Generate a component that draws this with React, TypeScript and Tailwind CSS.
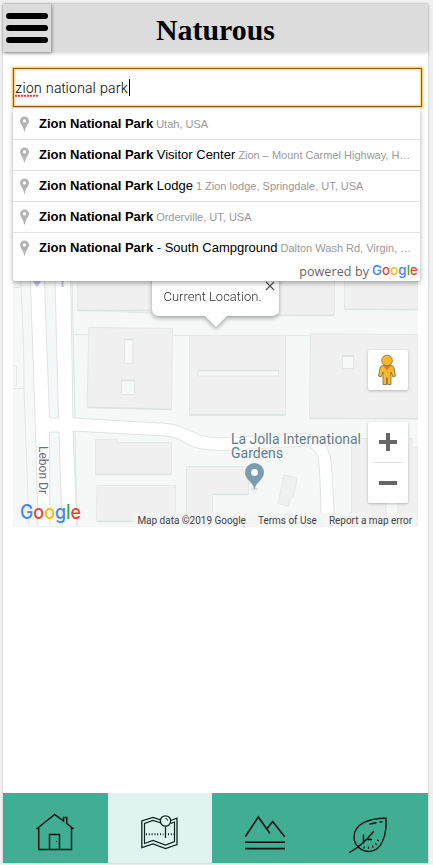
import React from "react";

type Suggestion = { main: string; rest?: string; detail: string };

const suggestions: Suggestion[] = [
  { main: "Zion National Park", detail: "Utah, USA" },
  { main: "Zion National Park", rest: "Visitor Center", detail: "Zion – Mount Carmel Highway, H…" },
  { main: "Zion National Park", rest: "Lodge", detail: "1 Zion lodge, Springdale, UT, USA" },
  { main: "Zion National Park", detail: "Orderville, UT, USA" },
  { main: "Zion National Park", rest: "- South Campground", detail: "Dalton Wash Rd, Virgin, …" },
];

function GoogleWord({ size, width }: { size: number; width: number }) {
  return (
    <svg width={width + 1} height={size * 1.3} className="block overflow-visible" fontFamily="Inter, sans-serif" fontWeight="500" fontSize={size}>
      <text x="0" y={size * 0.97} textLength={width} lengthAdjust="spacingAndGlyphs">
        <tspan fill="#4285f4">G</tspan>
        <tspan fill="#ea4335">o</tspan>
        <tspan fill="#fbbc05">o</tspan>
        <tspan fill="#4285f4">g</tspan>
        <tspan fill="#34a853">l</tspan>
        <tspan fill="#ea4335">e</tspan>
      </text>
    </svg>
  );
}

function Header() {
  return (
    <header className="relative flex h-[48px] items-center justify-center bg-[#dcdcdc] shadow-[0_1px_4px_rgba(0,0,0,0.2)]">
      <button aria-label="Menu" className="absolute left-0 top-0 flex h-[48px] w-[48px] flex-col items-center justify-center gap-[6px] shadow-[1px_1px_3px_rgba(0,0,0,0.4)]">
        <span className="h-[6px] w-[42px] rounded-full bg-black" />
        <span className="h-[6px] w-[42px] rounded-full bg-black" />
        <span className="h-[6px] w-[42px] rounded-full bg-black" />
      </button>
      <h1 className="pt-[4px] font-['Liberation_Serif',serif] text-[30px] font-bold leading-[44px]">
        <svg width="120" height="44" className="block">
          <text x="0" y="32" textLength="119" lengthAdjust="spacingAndGlyphs">Naturous</text>
        </svg>
      </h1>
    </header>
  );
}

function SearchBox() {
  return (
    <div className="ml-[10px] mt-[16px] flex h-[39px] w-[409px] items-center border border-[#8f5f08] bg-white pl-px shadow-[0_0_2px_1px_#f2b544,inset_0_0_2px_1px_#f8cf86]">
      <div className="relative flex items-center font-[Inter,sans-serif] text-[14px] leading-[18px] text-[#222]">
        <svg width="114" height="20" className="block overflow-visible">
          <text x="0" y="15" textLength="113" lengthAdjust="spacingAndGlyphs" fontWeight="300" fill="#111">zion national park</text>
          <path d="M0 17.8H23" stroke="#f03b3b" strokeWidth="2" strokeDasharray="2 1" />
        </svg>
        <span className="h-[17px] w-px bg-black" />
      </div>
    </div>
  );
}

function Suggestions() {
  return (
    <div className="absolute left-0 top-[-19px] h-[173px] w-[407px] rounded-b-[2px] bg-white font-['Liberation_Sans',sans-serif] shadow-[0_2px_5px_rgba(0,0,0,0.35)]">
      {suggestions.map((item, index) => (
        <div key={index} className={`flex h-[31px] items-center pl-[7px] ${index === 0 ? "" : "border-t border-[#e2e2e2]"}`}>
          <svg width="9" height="16" viewBox="0 0 9 16" className="mr-[10px] shrink-0">
            <path fillRule="evenodd" d="M4.5.5C2 .5 0 2.400 0 4.900C0 8 3.500 9.500 4.100 15.500H4.900C5.500 9.500 9 8 9 4.900C9 2.400 7 .5 4.500 .5ZM4.500 3.200a1.700 1.700 0 1 1 0 3.400a1.700 1.700 0 0 1 0-3.400Z" fill="#b3b3b3" />
          </svg>
          <div className="whitespace-nowrap text-[11px] leading-[30px] text-[#999]">
            <span className="text-[13px] text-black"><b>{item.main}</b>{item.rest ? ` ${item.rest}` : ""}</span>
            <span className="ml-[3px]">{item.detail}</span>
          </div>
        </div>
      ))}
      <div className="flex h-[16px] items-center justify-end gap-[3px] pr-px font-['Open_Sans',sans-serif] text-[12.5px] tracking-[0.1px] text-[#666]">
        <span className="pt-[2px]">powered by</span>
        <GoogleWord size={13.5} width={46} />
      </div>
    </div>
  );
}

function StreetMap() {
  return (
    <svg width="405" height="400" viewBox="13 127 405 400" className="block">
      <rect x="13" y="127" width="405" height="400" fill="#f6f8f8" />
      <g fill="none" stroke="#e3e7e7">
        <path d="M20 270C23 320 24 360 24 388L29 527M13 388.500H24M13 366h3.500v19.500H13M13 287.500H20" />
        <path d="M74 334.500L190 335.500H290L418 336.500" />
      </g>
      <path d="M29 240L35.500 430L38 527H77L73 431L165 436C182 437 186 447 203 449.300Q214 450.500 226 450.300L304 446.200Q314 446 318 457Q320 465 321.500 527H335L331.500 464Q329 444 318 437.500Q309 432.500 296 433.300L226 437.800Q209 438 200 435C188 430 178 424 165 423.300L73 418L70 240Z" fill="#fff" stroke="#e1e4e4" />
      <g fill="#f5f8f8" stroke="#e1e4e4">
        <path d="M43 240L49.500 418H58.500L54 240ZM49.500 432H59L62 527H50Z" />
        <path d="M72 280L75 418M75 431L77 527" fill="none" />
      </g>
      <path d="M32 280h10l-5 7ZM61.500 281h2v6h-2Z" fill="#bfc4dc" />
      <g fill="#f0f0f0" stroke="#e5e8e8">
        <path d="M77.500 250H334.500V315L224 316L77.500 310ZM344.500 250H418V310L344.500 309ZM89 327.500L172.500 328.500L171.500 409L87 407ZM189.500 335.500H285.500V415H189.500ZM310.500 334L418 334.500V419L309.500 418Z" />
        <path d="M95.500 439.500L117 439V442.500H171.500V474H95.500ZM97 485.500H175.500V521H96.500ZM186.500 466.500H248.500V494.500H212.500V527H186.500ZM284 475L297.500 478L293 497.500L290 498.500L288.500 506L278 503.500ZM351.500 438.500H412V447H418V527H398V501H386V527H351.500Z" />
      </g>
      <path d="M77.500 310.500L150 310.500M280 315.500H334.500M344.500 309.500H418M87 407.500L171.500 409.500M189.500 415H285.500M309.500 418.500H418M95.500 474.500H171.500M97 521.500H175M212.500 494.500H248" fill="none" stroke="#dde3e2" strokeWidth="1.500" />
      <g fill="#f7f8f8" stroke="#e2e6e5">
        <path d="M124.500 339H133V363.500H124.500ZM121.500 380H134.500V394.500H121.500ZM198 370.500H278.500V376H198ZM342.500 356H353.500V368.500H342.500Z" />
        <path d="M124 339.500h9M121 380.500h14M198 370.500h81M342 356h12" stroke="#dbe1e0" strokeWidth="1.500" />
      </g>
      <text transform="translate(38.500 446) rotate(90)" textLength="48" lengthAdjust="spacingAndGlyphs" fontFamily="Roboto, sans-serif" fontSize="12" fill="#65717f" stroke="#fff" strokeWidth="2" paintOrder="stroke">Lebon Dr</text>
      <g fontFamily="Roboto, sans-serif" fontSize="14" fill="#607d8b" stroke="#f9fafa" strokeWidth="2" paintOrder="stroke">
        <text x="231" y="444" textLength="130" lengthAdjust="spacingAndGlyphs">La Jolla International</text>
        <text x="231" y="458" textLength="52" lengthAdjust="spacingAndGlyphs">Gardens</text>
      </g>
      <ellipse cx="254.500" cy="489" rx="3.500" ry="1.500" fill="#dde0e0" />
      <path d="M254.500 463a9.500 9.500 0 0 0-9.500 9.500C245 480 253.500 482 254.100 489H254.900C255.500 482 264 480 264 472.500A9.500 9.500 0 0 0 254.500 463Z" fill="#7a9cae" />
      <circle cx="254.500" cy="472.500" r="3.400" fill="#fff" />
    </svg>
  );
}

function Pegman() {
  return (
    <svg width="18" height="32" viewBox="1 0 18 32" className="mr-[2px]">
      <path d="M6 11.500Q3.500 11.500 3 14L1.500 22L4 23L6 18V30.500H9.500V24H10.500V30.500H14V18L16 23L18.500 22L17 14Q16.500 11.500 14 11.500Z" fill="#fbb92a" stroke="#74664e" strokeWidth=".8" />
      <path d="M6 11.500H14L10 16.500Z" fill="#e57b25" />
      <circle cx="10" cy="6.500" r="5.300" fill="#fbb92a" stroke="#74664e" strokeWidth=".8" />
    </svg>
  );
}

function MapPanel() {
  return (
    <main className="relative ml-[10px] mt-[20px] h-[400px] w-[405px] font-[Roboto,sans-serif]">
      <StreetMap />
      <svg width="140" height="72" viewBox="145 258 140 72" className="absolute left-[132px] top-[131px] overflow-visible drop-shadow-[0_2px_2px_rgba(0,0,0,0.35)]">
        <path d="M152 260H279V309Q279 316 272 316H227L216 327L205 316H159Q152 316 152 309Z" fill="#fff" />
        <text x="163.500" y="301" textLength="98" lengthAdjust="spacing" fontSize="13" fontWeight="300" fill="#333">Current Location.</text>
        <path d="M266 282l8 8M274 282l-8 8" stroke="#555" strokeWidth="1.200" />
      </svg>
      <div className="absolute left-[355px] top-[223px] flex h-[40px] w-[40px] items-center justify-center rounded-[2px] bg-white shadow-[0_1px_3px_rgba(0,0,0,0.25)]"><Pegman /></div>
      <div className="absolute left-[355px] top-[295px] flex h-[81px] w-[40px] flex-col rounded-[2px] bg-white shadow-[0_1px_3px_rgba(0,0,0,0.25)]">
        <button aria-label="Zoom in" className="flex h-[40px] items-center justify-center"><svg width="18" height="18"><path d="M9 0V18M0 9H18" stroke="#666" strokeWidth="4" /></svg></button>
        <span className="mx-[5px] h-px bg-[#e2e2e2]" />
        <button aria-label="Zoom out" className="flex h-[40px] items-center justify-center"><svg width="18" height="4"><path d="M0 2H18" stroke="#666" strokeWidth="4" /></svg></button>
      </div>
      <div className="absolute left-[7px] top-[373px]"><GoogleWord size={20} width={61} /></div>
      <div className="absolute bottom-0 right-0 flex h-[14px] items-center gap-[12px] bg-[#f4f4f4]/80 pl-[5px] pr-[6px] text-[10px] tracking-[-0.02px] text-[#444]">
        <span>Map data ©2019 Google</span>
        <span>Terms of Use</span>
        <span>Report a map error</span>
      </div>
      <Suggestions />
    </main>
  );
}

function Navigation() {
  return (
    <nav className="mt-auto flex h-[70px] bg-[#41ae94]">
      <a className="w-[105px]">
        <svg width="105" height="70" viewBox="3 793 105 70" fill="none" stroke="#071511" strokeWidth="1.500">
          <path d="M38.700 827.500L36.500 829L54.700 814.500L63.500 821V817.500H66.700V823.500L73.700 829L71.500 827.500V849.500H38.700Z" />
          <path d="M49.500 849.500V834.500H59.500V849.500" />
          <circle cx="56.500" cy="841.500" r=".7" fill="#071511" stroke="none" />
        </svg>
      </a>
      <a className="w-[104px] bg-[#e0f3ee]">
        <svg width="104" height="70" viewBox="108 793 104 70" fill="none" stroke="#10231d" strokeWidth="1.300">
          <path d="M160.500 819.800L153 817.500L141.800 821V847.500L153 844L165.500 848.500L177 844.500V818.200L170.500 820.500" />
          <path d="M161 823L153 820.500L144.500 823.500V843.500L153 840.500L165.500 845L174.500 841.500V822L170.500 823.500" strokeWidth="1.200" />
          <circle cx="165.500" cy="821" r="5.200" />
          <path d="M165.500 826.500V838" />
          <path d="M146 834.200H163.500M168 834.200H174" strokeWidth="2" strokeDasharray="1 1.800" />
          <path d="M165.500 818.500q2 0 2 2" strokeWidth="1" />
        </svg>
      </a>
      <a className="w-[108px]">
        <svg width="108" height="70" viewBox="212 793 108 70" fill="none" stroke="#071511" strokeWidth="1.600">
          <path d="M245.200 836.800L258.300 817L270 833.500M267 828.500L272.700 821.500L284.700 836.800M245 842.300H285M245 848.600H285" />
        </svg>
      </a>
      <a className="w-[108px]">
        <svg width="108" height="70" viewBox="320 793 108 70" fill="none" stroke="#071511" strokeWidth="1.400" strokeLinecap="round">
          <path d="M386 818.200C369 818 354 824 354 837C354 845 361 851.500 369 851.500C382 851.500 387 834 386 818.200Z" />
          <path d="M349.500 852.500Q363 845 373.500 831.500M363.500 835V843M366 839.500L371.500 839.500M370 824L376 822.800M380 822L382 821.800" />
          <path d="M364.500 847L363.800 848M368.500 847V848.200M372.500 846L373 847.200M375.500 843.500L376.300 844.500M377.500 840L378.600 840.700" strokeWidth="1.200" />
        </svg>
      </a>
    </nav>
  );
}

export default function App() {
  return (
    <div className="h-[865px] w-[433px] overflow-hidden bg-[#f1f1f1] pl-[3px] pt-[4px]">
      <div className="flex h-[859px] w-[425px] flex-col bg-white shadow-[0_0_2px_rgba(0,0,0,0.25)]">
        <Header />
        <SearchBox />
        <MapPanel />
        <Navigation />
      </div>
    </div>
  );
}
